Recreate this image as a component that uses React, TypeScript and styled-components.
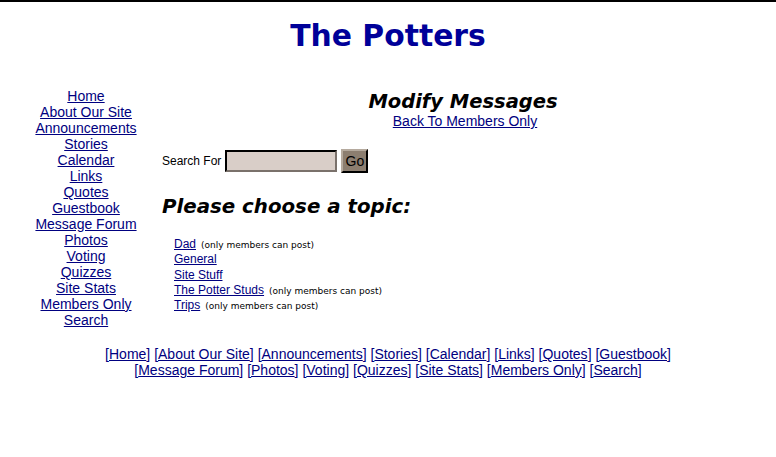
import React from 'react';
import styled, { createGlobalStyle } from 'styled-components';

const GlobalStyle = createGlobalStyle`
  * {
    box-sizing: border-box;
  }

  html, body {
    margin: 0;
    padding: 0;
    background: #ffffff;
  }

  body {
    font-family: 'Liberation Sans', Arial, sans-serif;
    border-top: 2px solid #000000;
  }
`;

const Page = styled.div`
  width: 776px;
  min-height: 455px;
`;

const Title = styled.h1`
  margin: 0;
  padding-top: 17px;
  height: 86px;
  text-align: center;
  font-family: 'DejaVu Sans', Verdana, sans-serif;
  font-size: 29.8px;
  font-weight: bold;
  color: #000099;
  line-height: 34px;
`;

const Columns = styled.div`
  display: flex;
  padding-left: 10px;
`;

const Nav = styled.nav`
  width: 152px;
  display: flex;
  flex-direction: column;
  align-items: center;
`;

const NavLink = styled.a`
  font-size: 14px;
  line-height: 16px;
  color: #000080;
  text-decoration: underline;
`;

const Main = styled.main`
  width: 602px;
  display: flex;
  flex-direction: column;
`;

const PageHeading = styled.h2`
  margin: 2px 0 0 0;
  text-align: center;
  font-family: 'DejaVu Sans', Verdana, sans-serif;
  font-size: 19.5px;
  font-style: italic;
  font-weight: bold;
  line-height: 24px;
  color: #000000;
`;

const BackLink = styled.a`
  align-self: center;
  margin-left: 4px;
  font-size: 14px;
  line-height: 15px;
  color: #000080;
  text-decoration: underline;
`;

const SearchForm = styled.form`
  display: flex;
  align-items: center;
  gap: 4px;
  margin-top: 20px;
`;

const Label = styled.label`
  font-size: 12px;
  color: #000000;
`;

const SearchInput = styled.input`
  width: 112px;
  height: 22px;
  margin: 0;
  padding: 1px 3px;
  background: #d9cec8;
  border: 2px inset #7a716b;
  border-top-color: #3a3430;
  border-left-color: #3a3430;
  font-size: 12px;
`;

const GoButton = styled.button`
  width: 27px;
  height: 24px;
  margin: 0;
  padding: 0;
  background: #8c7e70;
  border: 2px outset #b5aa9e;
  border-right-color: #3b342d;
  border-bottom-color: #3b342d;
  color: #000000;
  font-family: 'Liberation Sans', Arial, sans-serif;
  font-size: 14px;
`;

const TopicHeading = styled.h3`
  margin: 22px 0 0 0;
  font-family: 'DejaVu Sans', Verdana, sans-serif;
  font-size: 19.8px;
  font-style: italic;
  font-weight: bold;
  line-height: 24px;
  color: #000000;
`;

const TopicList = styled.ul`
  list-style: none;
  margin: 16px 0 0 12px;
  padding: 0;
`;

const TopicRow = styled.li`
  height: 15.25px;
  line-height: 15px;
  white-space: nowrap;
`;

const TopicLink = styled.a`
  font-size: 12px;
  color: #000080;
  text-decoration: underline;
`;

const Note = styled.span`
  margin-left: 5px;
  font-family: 'DejaVu Sans', Verdana, sans-serif;
  font-size: 9px;
  color: #000000;
`;

const Footer = styled.footer`
  margin-top: 18px;
  text-align: center;
  font-size: 14px;
  line-height: 16px;
  color: #000080;
`;

const FooterLine = styled.div`
  white-space: nowrap;
`;

const FooterLink = styled.a`
  color: #000080;
  text-decoration: underline;
`;

const navItems = [
  'Home',
  'About Our Site',
  'Announcements',
  'Stories',
  'Calendar',
  'Links',
  'Quotes',
  'Guestbook',
  'Message Forum',
  'Photos',
  'Voting',
  'Quizzes',
  'Site Stats',
  'Members Only',
  'Search',
];

const topics = [
  { name: 'Dad', membersOnly: true },
  { name: 'General', membersOnly: false },
  { name: 'Site Stuff', membersOnly: false },
  { name: 'The Potter Studs', membersOnly: true },
  { name: 'Trips', membersOnly: true },
];

const footerLines = [navItems.slice(0, 8), navItems.slice(8)];

const App: React.FC = () => {
  return (
    <Page>
      <GlobalStyle />
      <Title>The Potters</Title>

      <Columns>
        <Nav>
          {navItems.map(item => (
            <NavLink key={item} href="#">
              {item}
            </NavLink>
          ))}
        </Nav>

        <Main>
          <PageHeading>Modify Messages</PageHeading>
          <BackLink href="#">Back To Members Only</BackLink>

          <SearchForm onSubmit={e => e.preventDefault()}>
            <Label htmlFor="search">Search For</Label>
            <SearchInput id="search" type="text" />
            <GoButton type="submit">Go</GoButton>
          </SearchForm>

          <TopicHeading>Please choose a topic:</TopicHeading>

          <TopicList>
            {topics.map(topic => (
              <TopicRow key={topic.name}>
                <TopicLink href="#">{topic.name}</TopicLink>
                {topic.membersOnly && <Note>(only members can post)</Note>}
              </TopicRow>
            ))}
          </TopicList>
        </Main>
      </Columns>

      <Footer>
        {footerLines.map((line, i) => (
          <FooterLine key={i}>
            {line.map((item, j) => (
              <React.Fragment key={item}>
                {j > 0 && ' '}[<FooterLink href="#">{item}</FooterLink>]
              </React.Fragment>
            ))}
          </FooterLine>
        ))}
      </Footer>
    </Page>
  );
};

export default App;
